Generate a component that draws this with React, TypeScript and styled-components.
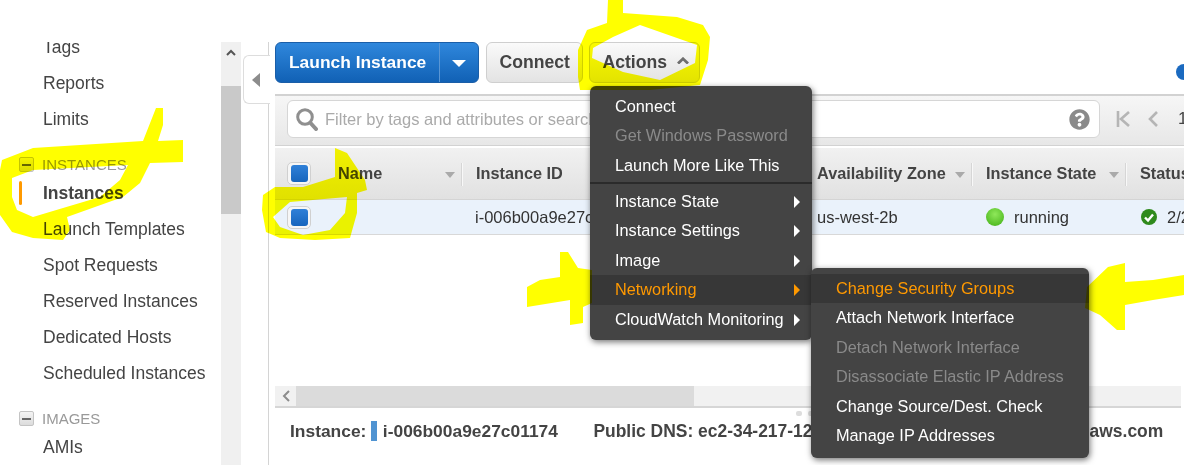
import React from "react";
import styled, { createGlobalStyle } from "styled-components";
import { FaQuestionCircle } from "react-icons/fa";

const Global = createGlobalStyle`
  html, body { margin: 0; padding: 0; background: #fff; }
  * { box-sizing: border-box; }
  body { font-family: "Liberation Sans", Arial, sans-serif; color: #444; }
`;

const Page = styled.div`
  position: relative;
  width: 1184px;
  height: 465px;
  overflow: hidden;
  display: flex;
  background: #fff;
`;

/* ---------- sidebar ---------- */
const Sidebar = styled.aside`
  width: 269px;
  margin-top: 42px;
  flex: none;
  display: flex;
  border-right: 1px solid #d4d4d4;
`;
const Nav = styled.nav`
  width: 221px;
  overflow: hidden;
  flex: none;
`;
const NavInner = styled.div`
  margin-top: -13px;
`;
const NavItem = styled.div<{ $active?: boolean }>`
  position: relative;
  height: 36px;
  line-height: 36px;
  padding-left: 43px;
  font-size: 17.5px;
  white-space: nowrap;
  font-weight: ${(p) => (p.$active ? 700 : 400)};
  color: #444;
  ${(p) =>
    p.$active
      ? `&::before { content: ""; position: absolute; left: 19px; top: 6px; width: 3px; height: 24px; background: #f90; border-radius: 2px; }`
      : ""}
`;
const SectionHead = styled.div`
  height: 21px;
  margin-top: 17px;
  padding-left: 19px;
  display: flex;
  align-items: center;
  gap: 8px;
  font-size: 15px;
  color: #999;
`;
const SectionToggle = styled.span`
  width: 15px;
  height: 15px;
  border: 1px solid #c4c4c4;
  border-radius: 2px;
  background: linear-gradient(#f4f4f4, #dcdcdc);
  display: flex;
  align-items: center;
  justify-content: center;
  &::after { content: ""; width: 9px; height: 2px; background: #666; }
`;
const NavScroll = styled.div`
  width: 20px;
  background: #f0f0f0;
  display: flex;
  flex-direction: column;
  flex: none;
`;
const ScrollUp = styled.div`
  height: 44px;
  display: flex;
  justify-content: center;
  padding-top: 7px;
`;
const ScrollThumb = styled.div`
  height: 128px;
  background: #c9c9c9;
`;

const CollapseTab = styled.div`
  position: absolute;
  left: 243px;
  top: 55px;
  width: 27px;
  height: 49px;
  background: #fff;
  border: 1px solid #ddd;
  border-right: none;
  border-radius: 6px 0 0 6px;
  display: flex;
  align-items: center;
  padding-left: 8px;
  &::after {
    content: "";
    border-style: solid;
    border-width: 7px 8px 7px 0;
    border-color: transparent #8c8c8c transparent transparent;
  }
`;

/* ---------- main ---------- */
const Main = styled.main`
  flex: 1;
  min-width: 0;
  padding: 42px 3px 0 6px;
  display: flex;
  flex-direction: column;
`;
const ButtonRow = styled.div`
  height: 41px;
  flex: none;
  display: flex;
  margin-right: -3px;
`;
const SplitButton = styled.div`
  width: 204px;
  display: flex;
  border: 1px solid #1a5ea8;
  border-radius: 6px;
  overflow: hidden;
  background: linear-gradient(#2f87dc, #1161b5);
  color: #fff;
  font-weight: 700;
  font-size: 17.4px;
`;
const SplitLabel = styled.div`
  flex: 1;
  display: flex;
  align-items: center;
  padding-left: 13px;
  border-right: 1px solid #5a96d4;
`;
const SplitCaret = styled.div`
  width: 38px;
  display: flex;
  align-items: center;
  justify-content: center;
  &::after {
    content: "";
    margin-top: 2px;
    border-style: solid;
    border-width: 7px 7px 0 7px;
    border-color: #fff transparent transparent transparent;
  }
`;
const Button = styled.div<{ $width: number; $gap: number }>`
  width: ${(p) => p.$width}px;
  margin-left: ${(p) => p.$gap}px;
  display: flex;
  align-items: center;
  padding-left: 12.5px;
  gap: 10px;
  border: 1px solid #cfcfcf;
  border-radius: 6px;
  background: linear-gradient(#fafafa, #e3e3e3);
  font-weight: 700;
  font-size: 17.6px;
  color: #444;
`;
const RefreshDot = styled.div`
  width: 16px;
  height: 16px;
  border-radius: 50%;
  background: #1b6ac0;
  margin-left: auto;
  margin-right: -8px;
  margin-bottom: 3px;
  align-self: flex-end;
`;
const Toolbar = styled.div`
  margin-top: 11px;
  height: 52px;
  flex: none;
  margin-right: -3px;
  border-top: 2px solid #d2d2d2;
  border-bottom: 1px solid #d2d2d2;
  background: linear-gradient(#f6f6f6, #e7e7e7);
  padding: 4px 0 0 12px;
  display: flex;
  align-items: flex-start;
  overflow: hidden;
`;
const SearchBox = styled.div`
  width: 813px;
  height: 38px;
  flex: none;
  background: #fff;
  border: 1px solid #d6d6d6;
  border-radius: 6px;
  display: flex;
  align-items: center;
  padding: 0 9px 0 8px;
  gap: 7px;
  font-size: 16.5px;
  color: #aaa;
`;
const SearchText = styled.span`
  flex: 1;
  white-space: nowrap;
  overflow: hidden;
  padding-top: 1px;
`;
const Pager = styled.div`
  display: flex;
  flex: none;
  align-items: center;
  height: 38px;
  margin-left: 16px;
  gap: 17px;
  font-size: 17px;
  color: #444;
`;
const PageNumber = styled.span`
  margin-left: 3px;
`;

const TableHead = styled.div`
  margin-top: 2px;
  height: 52px;
  flex: none;
  margin-right: -3px;
  display: flex;
  border-bottom: 1px solid #d4d4d4;
  background: linear-gradient(#f1f1f1, #e1e1e1);
  overflow: hidden;
`;
const HeadCell = styled.div<{ $width: number }>`
  position: relative;
  width: ${(p) => p.$width}px;
  flex: none;
  display: flex;
  align-items: center;
  padding-left: 13px;
  font-weight: 700;
  font-size: 16.3px;
  color: #444;
  white-space: nowrap;
  &::after {
    content: "";
    position: absolute;
    right: 0;
    top: 15px;
    height: 23px;
    width: 1px;
    background: #f8f8f8;
    box-shadow: -1px 0 0 #d6d6d6;
  }
`;
const SortCaret = styled.span`
  position: absolute;
  right: 8px;
  top: 24px;
  border-style: solid;
  border-width: 6px 5px 0 5px;
  border-color: #aaa transparent transparent transparent;
`;
const CheckCell = styled.div<{ $width: number }>`
  width: ${(p) => p.$width}px;
  flex: none;
  display: flex;
  align-items: center;
  padding-left: 12px;
`;
const CheckBox = styled.span`
  width: 24px;
  height: 23px;
  border: 1px solid #d0d0d0;
  border-radius: 5px;
  background: #f6f6f6;
  display: flex;
  align-items: center;
  justify-content: center;
  &::after {
    content: "";
    width: 17px;
    height: 17px;
    border-radius: 3px;
    background: linear-gradient(#2f80d8, #1765bd);
  }
`;
const TableRow = styled.div`
  height: 35px;
  flex: none;
  margin-right: -3px;
  display: flex;
  background: #eaf2fb;
  border-bottom: 1px solid #d8d8d8;
  overflow: hidden;
`;
const Cell = styled.div<{ $width: number; $pad?: number }>`
  width: ${(p) => p.$width}px;
  flex: none;
  display: flex;
  align-items: center;
  padding-left: ${(p) => p.$pad ?? 12}px;
  gap: 10px;
  font-size: 16.5px;
  color: #333;
  white-space: nowrap;
`;
const StateDot = styled.span`
  width: 18px;
  height: 18px;
  border-radius: 50%;
  background: radial-gradient(circle at 50% 35%, #8fe85a, #3fae14);
`;
const Spacer = styled.div`
  flex: 1;
`;
const HScroll = styled.div`
  height: 20px;
  flex: none;
  display: flex;
  background: #f1f1f1;
`;
const HScrollLeft = styled.div`
  width: 21px;
  display: flex;
  align-items: center;
  justify-content: center;
`;
const HScrollThumb = styled.div`
  width: 398px;
  background: #dbdbdb;
`;
const Details = styled.div`
  height: 59px;
  flex: none;
  border-top: 2px solid #d6d6d6;
  position: relative;
  display: flex;
  align-items: flex-start;
  padding: 13px 0 0 15px;
  font-weight: 700;
  font-size: 17.4px;
  line-height: 20px;
  color: #444;
  white-space: nowrap;
`;
const Grip = styled.div`
  position: absolute;
  left: 521px;
  top: 3px;
  display: flex;
  gap: 6px;
  &::before, &::after {
    content: "";
    width: 6px;
    height: 5px;
    border-radius: 2px;
    background: #ddd;
  }
`;
const InstanceMark = styled.span`
  width: 6px;
  height: 20px;
  background: #5094d2;
  margin: 0 6px 0 4.5px;
`;
const DnsLabel = styled.span`
  margin-left: 35.5px;
  font-size: 17.45px;
`;

/* ---------- menus ---------- */
const Menu = styled.div<{ $x: number; $y: number; $w: number; $pb: number }>`
  position: absolute;
  left: ${(p) => p.$x}px;
  top: ${(p) => p.$y}px;
  width: ${(p) => p.$w}px;
  padding: 5.5px 0 ${(p) => p.$pb}px;
  background: #444;
  border-radius: 6px;
  box-shadow: 1px 2px 6px rgba(0, 0, 0, 0.55);
  font-size: 16.3px;
`;
const MenuItem = styled.div<{ $state?: "on" | "off"; $arrow?: boolean }>`
  position: relative;
  height: 29.5px;
  line-height: 29.5px;
  padding-left: 25px;
  white-space: nowrap;
  color: ${(p) => (p.$state === "on" ? "#ff9900" : p.$state === "off" ? "#8a8a8a" : "#fff")};
  background: ${(p) => (p.$state === "on" ? "#373737" : "transparent")};
  ${(p) =>
    p.$arrow
      ? `&::after { content: ""; position: absolute; right: 12px; top: 9px; border-style: solid; border-width: 6px 0 6px 6px; border-color: transparent transparent transparent ${p.$state === "on" ? "#ff9900" : "#fff"}; }`
      : ""}
`;
const MenuDivider = styled.div`
  height: 2px;
  margin: 1.5px 0 3px;
  background: #2b2b2b;
`;

/* ---------- highlighter ---------- */
const Ink = styled.svg`
  position: absolute;
  left: 0;
  top: 0;
  mix-blend-mode: multiply;
  pointer-events: none;
`;
const CaretWrap = styled.span`
  display: flex;
  margin-top: -4px;
`;

const SearchIcon = () => (
  <svg width="22" height="23" viewBox="0 0 22 23" fill="none">
    <circle cx="9" cy="9" r="7.3" stroke="#8f8f8f" strokeWidth="3" />
    <path d="M14.5 15l5.5 6" stroke="#8f8f8f" strokeWidth="4" strokeLinecap="round" />
  </svg>
);
const CheckIcon = () => (
  <svg width="16" height="16" viewBox="0 0 16 16">
    <circle cx="8" cy="8" r="8" fill="#2f8a1c" />
    <path d="M4 8.5l3 3 5-6" fill="none" stroke="#fff" strokeWidth="2.4" />
  </svg>
);
const FirstIcon = () => (
  <svg width="15" height="18" viewBox="0 0 15 18" fill="none" stroke="#b5b5b5" strokeWidth="2.6">
    <path d="M2 1v16M13 2L5 9l8 7" />
  </svg>
);
const PrevIcon = () => (
  <svg width="10" height="18" viewBox="0 0 10 18" fill="none" stroke="#b5b5b5" strokeWidth="2.6">
    <path d="M9 2L2 9l7 7" />
  </svg>
);
const UpChevron = () => (
  <svg width="10" height="7" viewBox="0 0 10 7" fill="none" stroke="#555" strokeWidth="2">
    <path d="M1 6l4-4 4 4" />
  </svg>
);
const LeftChevron = () => (
  <svg width="8" height="12" viewBox="0 0 8 12" fill="none" stroke="#8c8c8c" strokeWidth="2">
    <path d="M7 1L2 6l5 5" />
  </svg>
);
const ActionsCaret = () => (
  <svg width="12" height="7" viewBox="0 0 12 7" fill="none" stroke="#6e6e6e" strokeWidth="2.8">
    <path d="M1 6.5L6 1.8 11 6.5" />
  </svg>
);

const topItems = ["Tags", "Reports", "Limits"];
const instanceItems = ["Launch Templates", "Spot Requests", "Reserved Instances", "Dedicated Hosts", "Scheduled Instances"];

const HighlighterInk = () => (
  <Ink width="1184" height="465" viewBox="0 0 1184 465">
    <path
      fill="#ffff00"
      fillRule="evenodd"
      d="M608 0L607 23L587 30L578 50L578 77L580 90L650 90L700 85L708 60L710 37L703 25L677 17L623 13L623 0Z M640 25L613 37L593 48L592 58L623 72L660 80L695 63L697 45Z"
    />
    <path
      fill="#ffff00"
      fillRule="evenodd"
      d="M156 108L143 141L33 148L2 160L0 170L0 215L12 232L33 238L63 240L70 230L67 217L123 197L140 183L150 163L183 162L183 140L158 141L163 125L163 108Z M12 178L33 170L128 165L120 180L100 197L63 208L33 217L17 210L12 197Z"
    />
    <path
      fill="#ffff00"
      fillRule="evenodd"
      d="M335 148L347 153L365 180L367 190L357 193L357 213L350 238L315 240L280 238L266 232L262 210L263 195L275 187L303 187L335 177Z M273 217L290 202L347 197L345 213L330 230L303 235L280 227Z"
    />
    <path
      fill="#ffff00"
      d="M560 252L568 252L578 268L592 270L592 303L583 307L583 323L570 325L570 300L527 307L527 287L540 280L560 277Z"
    />
    <path
      fill="#ffff00"
      d="M1125 263L1108 267L1087 287L1085 308L1100 315L1117 330L1125 330L1125 305L1153 300L1184 295L1184 275L1153 280L1125 282Z"
    />
  </Ink>
);

export default function App() {
  return (
    <>
      <Global />
      <Page>
        <Sidebar>
          <Nav>
            <NavInner>
              {topItems.map((t) => (
                <NavItem key={t}>{t}</NavItem>
              ))}
              <SectionHead>
                <SectionToggle />
                INSTANCES
              </SectionHead>
              <NavItem $active>Instances</NavItem>
              {instanceItems.map((t) => (
                <NavItem key={t}>{t}</NavItem>
              ))}
              <SectionHead>
                <SectionToggle />
                IMAGES
              </SectionHead>
              <NavItem>AMIs</NavItem>
            </NavInner>
          </Nav>
          <NavScroll>
            <ScrollUp>
              <UpChevron />
            </ScrollUp>
            <ScrollThumb />
          </NavScroll>
        </Sidebar>
        <CollapseTab />
        <Main>
          <ButtonRow>
            <SplitButton>
              <SplitLabel>Launch Instance</SplitLabel>
              <SplitCaret />
            </SplitButton>
            <Button $width={97} $gap={7}>Connect</Button>
            <Button $width={111} $gap={6}>
              Actions
              <CaretWrap>
                <ActionsCaret />
              </CaretWrap>
            </Button>
            <RefreshDot />
          </ButtonRow>
          <Toolbar>
            <SearchBox>
              <SearchIcon />
              <SearchText>Filter by tags and attributes or search by keyword</SearchText>
              <FaQuestionCircle size={21} color="#8a8a8a" />
            </SearchBox>
            <Pager>
              <FirstIcon />
              <PrevIcon />
              <PageNumber>1</PageNumber>
            </Pager>
          </Toolbar>
          <TableHead>
            <CheckCell $width={50}>
              <CheckBox />
            </CheckCell>
            <HeadCell $width={138}>
              Name
              <SortCaret />
            </HeadCell>
            <HeadCell $width={341}>Instance ID</HeadCell>
            <HeadCell $width={169}>
              Availability Zone
              <SortCaret />
            </HeadCell>
            <HeadCell $width={154}>
              Instance State
              <SortCaret />
            </HeadCell>
            <HeadCell $width={120}>Status Checks</HeadCell>
          </TableHead>
          <TableRow>
            <CheckCell $width={50}>
              <CheckBox />
            </CheckCell>
            <Cell $width={138} />
            <Cell $width={341}>i-006b00a9e27c01174</Cell>
            <Cell $width={169} $pad={13}>us-west-2b</Cell>
            <Cell $width={154} $pad={13}>
              <StateDot />
              running
            </Cell>
            <Cell $width={120} $pad={14}>
              <CheckIcon />
              2/2 checks
            </Cell>
          </TableRow>
          <Spacer />
          <HScroll>
            <HScrollLeft>
              <LeftChevron />
            </HScrollLeft>
            <HScrollThumb />
          </HScroll>
          <Details>
            <Grip />
            Instance:
            <InstanceMark />
            i-006b00a9e27c01174
            <DnsLabel>Public DNS: ec2-34-217-123-123.us-west-2.compute.amazonaws.com</DnsLabel>
          </Details>
        </Main>
        <Menu $x={590} $y={86} $w={222} $pb={6}>
          <MenuItem>Connect</MenuItem>
          <MenuItem $state="off">Get Windows Password</MenuItem>
          <MenuItem>Launch More Like This</MenuItem>
          <MenuDivider />
          <MenuItem $arrow>Instance State</MenuItem>
          <MenuItem $arrow>Instance Settings</MenuItem>
          <MenuItem $arrow>Image</MenuItem>
          <MenuItem $arrow $state="on">Networking</MenuItem>
          <MenuItem $arrow>CloudWatch Monitoring</MenuItem>
        </Menu>
        <Menu $x={811} $y={268} $w={278} $pb={7}>
          <MenuItem $state="on">Change Security Groups</MenuItem>
          <MenuItem>Attach Network Interface</MenuItem>
          <MenuItem $state="off">Detach Network Interface</MenuItem>
          <MenuItem $state="off">Disassociate Elastic IP Address</MenuItem>
          <MenuItem>Change Source/Dest. Check</MenuItem>
          <MenuItem>Manage IP Addresses</MenuItem>
        </Menu>
        <HighlighterInk />
      </Page>
    </>
  );
}
